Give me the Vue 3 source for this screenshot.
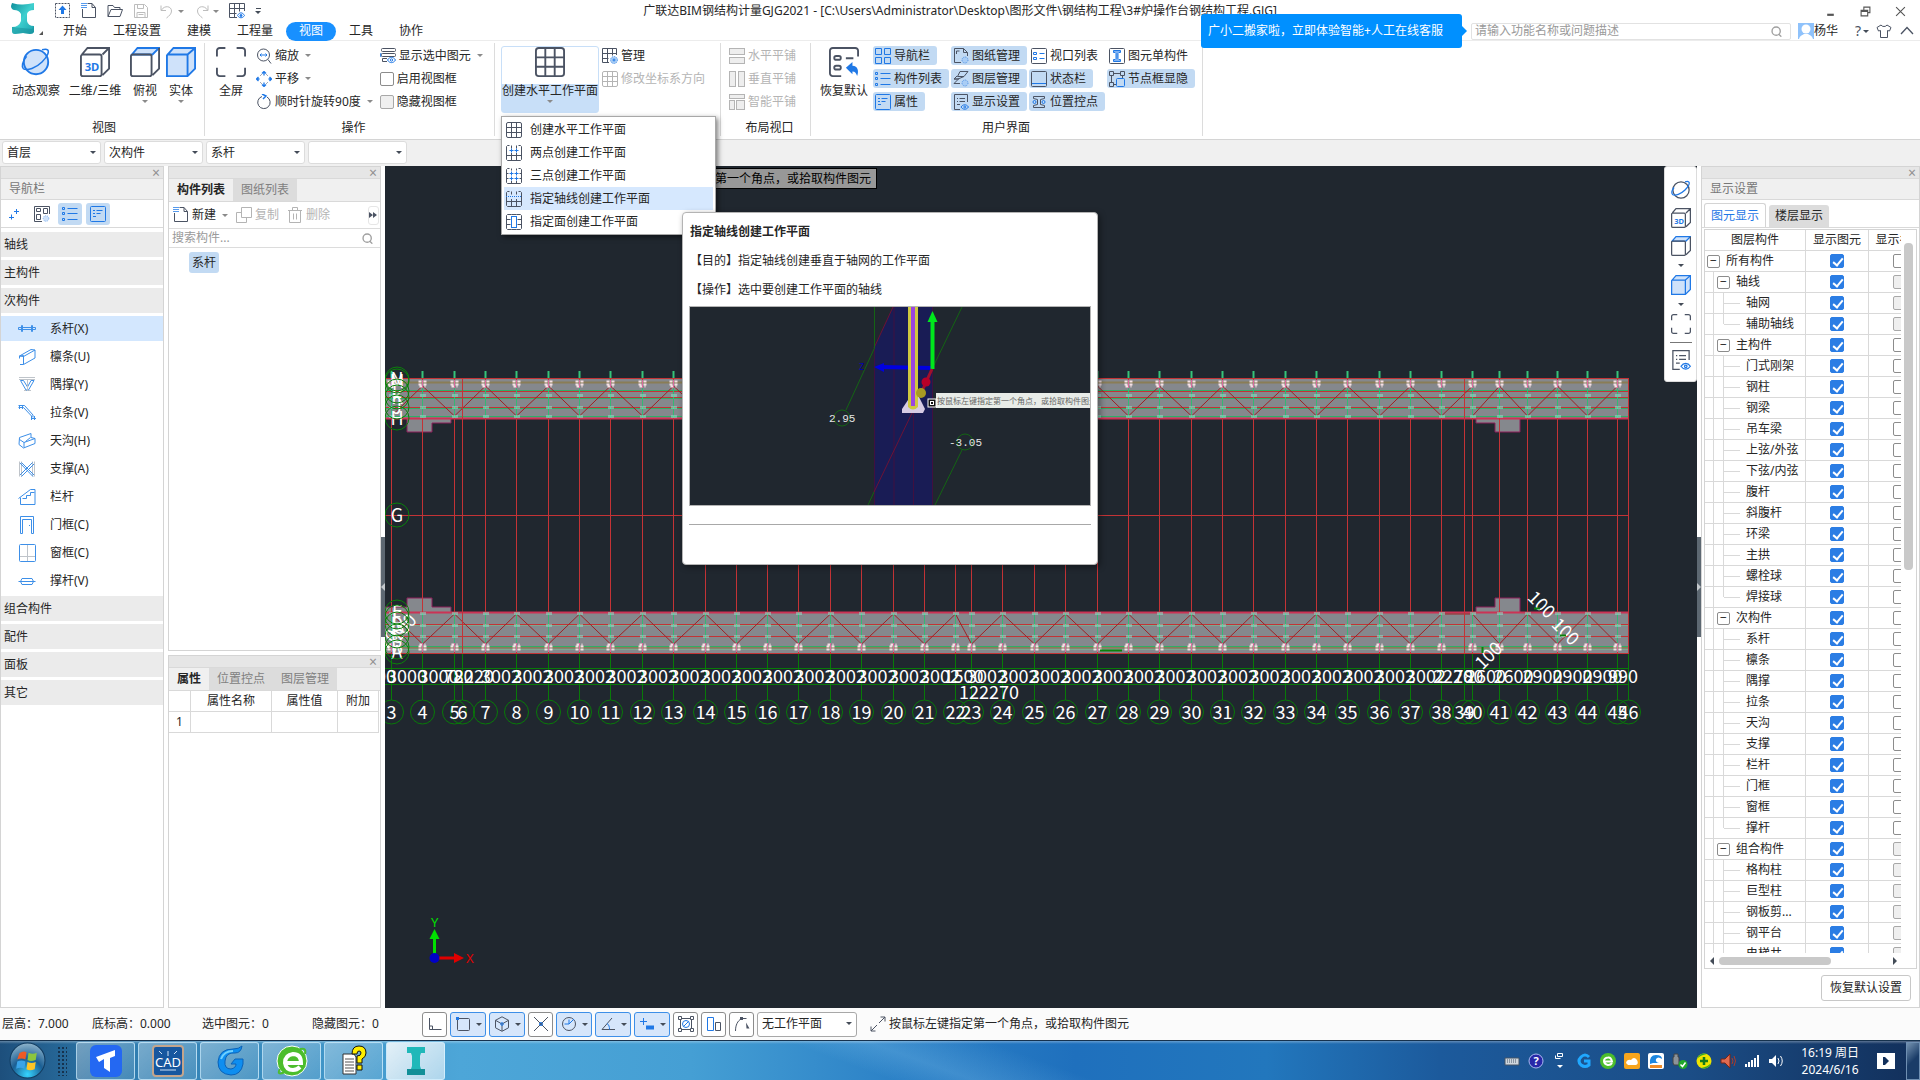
<template>
  <div class="app">
    <svg class="sprite" aria-hidden="true">
      <symbol id="i-upload" viewBox="0 0 16 16"><rect x="0.5" y="0.5" width="14" height="14" stroke-dasharray="2 1" /><path d="M7.5 2.5l4 4.5h-2.500v4h-3v-4H3.500z" fill="#1f78e6" stroke="none" /></symbol>
      <symbol id="i-new" viewBox="0 0 16 16"><path d="M1.500 6v8.500h13V4.500l-3.500-4H6.500M11 .5v4h3.500" /><path d="M.5 2.500h5M.5 4.500h5M.5.5h5M1 0v5M3 0v5M5 0v5" stroke="#1f78e6" stroke-dasharray="1 1" /></symbol>
      <symbol id="i-folder" viewBox="0 0 16 16"><path d="M1 13.500V2.500h5l1.500 2h5.500v2M1 13.500l3-7h11.500l-2.500 7z" /></symbol>
      <symbol id="i-save" viewBox="0 0 16 16"><path d="M1.500 1.500h10l3 3v10h-13zM4.500 1.500v4h6v-4M4 14.500V9.500h8v5M5.500 11.500h5" /></symbol>
      <symbol id="i-undo" viewBox="0 0 16 16"><path d="M2 2.500v5h5M2.500 7c3-5 10-4 10 1 0 3-2.500 5-5 7" /></symbol>
      <symbol id="i-redo" viewBox="0 0 16 16"><path d="M14 2.500v5H9M13.500 7c-3-5-10-4-10 1 0 3 2.500 5 5 7" /></symbol>
      <symbol id="i-grid" viewBox="0 0 16 16"><rect x="0.5" y="0.5" width="15" height="15" rx="1.5" /><path d="M5.500.5v15M10.500.5v15M.5 5.500h15M.5 10.500h15" /></symbol>
      <symbol id="i-grideye" viewBox="0 0 16 16"><path d="M15.500 8V.5H.5v14H8M5.500.5v14M10.500.5v8M.5 5.500h15M.5 10.500h7" /><path d="M8.500 12.500c2-3.500 5-3.500 7 0-2 3-5 3-7 0z" stroke="#1f78e6" fill="#fff" /><circle cx="12" cy="12.5" r="1" fill="#1f78e6" stroke="#1f78e6" /></symbol>
      <symbol id="i-gridgear" viewBox="0 0 16 16"><path d="M14.500 7V.5H.5v14H7M5.500.5v14M10.500.5v7M.5 5.500h14M.5 10.500h6" /><circle cx="12" cy="12" r="3.5" fill="#a9cdf5" stroke="#4a90e8" stroke-dasharray="1 1" /><circle cx="12" cy="12" r="1" stroke="#1f78e6" /></symbol>
      <symbol id="i-grid2" viewBox="0 0 16 16"><path d="M3.500.5h-2l-1 1v13l1 1h13l1-1v-13l-1-1h-2M5.500.5v3M10.500.5v3M5.500 8v7.500M10.500 8v7.500M.5 10.500h15" /><path d="M3.500 5.500h4M8.500 5.500h4M5.500 3.500v4M10.500 3.500v4" stroke="#1f78e6" /></symbol>
      <symbol id="i-grid3" viewBox="0 0 16 16"><path d="M3.500.5h-2l-1 1v13l1 1h13l1-1v-13l-1-1h-2M.5 5.500h2M13.500 5.500h2M.5 10.500h2M13.500 10.500h2M5.500.5v2M10.500.5v2M5.500 13v2.500M10.500 13v2.500" /><path d="M3.500 5.500h4M8.500 5.500h4M5.500 3.500v4M10.500 3.500v4M3.500 10.500h4M5.500 8.500v4M8.500 10.500h4M10.500 8.500v4" stroke="#1f78e6" /></symbol>
      <symbol id="i-gridline" viewBox="0 0 16 16"><path d="M3.500.5h-2l-1 1v13l1 1h13l1-1v-13l-1-1h-2M5.500.5v3M10.500.5v3M5.500 8v7.500M10.500 8v7.500M.5 10.500h15" /><path d="M0 5.500h16" stroke="#1f78e6" stroke-dasharray="1 1" /></symbol>
      <symbol id="i-gridface" viewBox="0 0 16 16"><path d="M5.500.5h-4l-1 1v13l1 1h4M10.500.5h4l1 1v13l-1 1h-4M5.500.5h5M5.500 15.500h5M.5 5.500h4M.5 10.500h4M11.500 5.500h4M11.500 10.500h4" /><rect x="5.5" y="2.5" width="5" height="11" stroke="#1f78e6" /></symbol>
      <symbol id="i-orbit" viewBox="0 0 16 16"><circle cx="8" cy="8" r="6.5" fill="#cfe2fa" stroke="#1f78e6" /><path d="M3 5C.5 8 .3 10.500 1.200 11.500c2 1.500 7-.5 10-3.500 3-3 4-5.500 3-6.500-.8-.6-2-.3-3 0" stroke="#1f78e6" stroke-width="0.8" /></symbol>
      <symbol id="i-orbit2" viewBox="0 0 16 16"><circle cx="8" cy="8" r="6.5" /><path d="M2.500 6C.5 8 .3 10.500 1.200 11.500c2 1.500 7-.5 10-3.500 3-3 4-5.500 3-6.500-.8-.6-2-.3-3 0" stroke="#1f78e6" /></symbol>
      <symbol id="i-cube3d" viewBox="0 0 16 16"><path d="M.5 5a1 1 0 0 1 1-1h9a1 1 0 0 1 1 1v9.500a1 1 0 0 1-1 1h-9a1 1 0 0 1-1-1zM1 4L4 .5h11.500L12 4M15.500.5v11L12 15M9 .5" /><text x="2.5" y="13" font-size="6" font-weight="700" fill="#1f78e6" stroke="none">3D</text></symbol>
      <symbol id="i-cube" viewBox="0 0 16 16"><path d="M1 4L4 .5h11.500L12 4z" fill="#cfe2fa" stroke="#1f78e6" /><path d="M.5 5a1 1 0 0 1 1-1h9a1 1 0 0 1 1 1v9.500a1 1 0 0 1-1 1h-9a1 1 0 0 1-1-1zM15.500.5v11L12 15" /></symbol>
      <symbol id="i-solid" viewBox="0 0 16 16"><path d="M.5 4.500L4 .5h11.500v11l-4 4H.5zM.5 4h11v11.500M11.500 4l4-3.500" fill="#cfe2fa" stroke="#1f78e6" /></symbol>
      <symbol id="i-full" viewBox="0 0 16 16"><path d="M.5 5V2a1.500 1.500 0 0 1 1.500-1.500h3M11 .5h3A1.500 1.500 0 0 1 15.500 2v3M15.500 11v3a1.500 1.500 0 0 1-1.500 1.500h-3M5 15.500H2A1.500 1.500 0 0 1 .5 14v-3" /></symbol>
      <symbol id="i-zoom" viewBox="0 0 16 16"><circle cx="7.5" cy="7" r="6" /><path d="M12 11.500l3 4" /><path d="M4 7h7M5.500 5.500L4 7l1.500 1.500M9.500 5.500L11 7 9.500 8.500" stroke="#1f78e6" /></symbol>
      <symbol id="i-pan" viewBox="0 0 16 16"><path d="M6 2.500L8 .5l2 2M6 13.500l2 2 2-2M2.500 6l-2 2 2 2M13.500 6l2 2-2 2M8 .5v4M8 11.500v4M.5 8h3M12.500 8h3" stroke="#1f78e6" stroke-width="1.3" /><path d="M4.500 4.500l1-1M11.500 4.500l-1-1M4.500 11.500l1 1M11.500 11.500l-1 1" /></symbol>
      <symbol id="i-rotate" viewBox="0 0 16 16"><path d="M6 2.500A6.200 6.200 0 1 0 11 3" /><path d="M6 0l4 2-3 3" stroke="#1f78e6" stroke-width="1.5" /></symbol>
      <symbol id="i-seleye" viewBox="0 0 16 16"><rect x="1.5" y="0.5" width="14" height="3" rx="1" /><rect x="1.5" y="5.5" width="14" height="3" rx="1" /><path d="M7 10.500H2.500v3H7" /><path d="M1 5l-.5 2L1 9" stroke="#1f78e6" /><path d="M7.500 12c2-3.500 6-3.500 8 0-2 3.500-6 3.500-8 0z" stroke="#1f78e6" fill="#fff" /><circle cx="11.5" cy="12" r="1.2" stroke="#1f78e6" /></symbol>
      <symbol id="i-tileh" viewBox="0 0 16 16"><rect x="0.5" y="0.5" width="15" height="6" fill="#eee" /><rect x="0.5" y="9.5" width="15" height="6" fill="#eee" /></symbol>
      <symbol id="i-tilev" viewBox="0 0 16 16"><rect x="0.5" y="0.5" width="6" height="15" fill="#eee" /><rect x="9.5" y="0.5" width="6" height="15" fill="#eee" /></symbol>
      <symbol id="i-tiles" viewBox="0 0 16 16"><rect x="0.5" y="0.5" width="15" height="4" fill="#eee" /><rect x="0.5" y="6.5" width="5" height="9" fill="#eee" /><rect x="7.5" y="6.5" width="8" height="9" fill="#eee" /></symbol>
      <symbol id="i-restore" viewBox="0 0 16 16"><path d="M6.500 15.500H2A1.500 1.500 0 0 1 .5 14V2A1.500 1.500 0 0 1 2 .5h12A1.500 1.500 0 0 1 15.500 2v3M9 6h4M8 11" /><rect x="2.8" y="4.8" width="3.5" height="2" rx="1" /><rect x="2.8" y="10" width="3.5" height="2" rx="1" /><path d="M9 11l3.500-3v2c3 0 3.500 3 2.500 5.500-.5-1.500-1-2.500-2.500-2.500v1.500z" fill="#1f78e6" stroke="none" /></symbol>
      <symbol id="i-nav" viewBox="0 0 16 16"><path d="M.5.5h6v6h-6zM9.500.5h6v6h-6zM.5 9.500h6v6h-6zM9.500 9.500h6v6h-6z" stroke="#1f78e6" /></symbol>
      <symbol id="i-list" viewBox="0 0 16 16"><path d="M5.500 2.500h10M5.500 7.500h10M5.500 13.500h10" stroke="#1f78e6" /><path d="M.5 1.500h2v2h-2zM.5 6.500h2v2h-2zM.5 12.500h2v2h-2z" stroke="#1f78e6" /></symbol>
      <symbol id="i-prop" viewBox="0 0 16 16"><rect x="0.5" y="0.5" width="15" height="15" rx="1" stroke="#1f78e6" /><path d="M3 4.500h2M6.500 4.500h6M3 7.500h2M6.500 7.500h4M3 10.500h3" stroke="#1f78e6" /></symbol>
      <symbol id="i-sheet" viewBox="0 0 16 16"><path d="M8 14.500H1.500V.5h9l4 4V8M10.500.5v4h4M3.500 6V3h3" /><circle cx="12" cy="12" r="3" fill="#a9cdf5" stroke="#4a90e8" stroke-dasharray="1 1" /></symbol>
      <symbol id="i-layer" viewBox="0 0 16 16"><path d="M4.500 5.500L7 .5h8l-4 5zM11 5.500L5 8H1l3-3M1 8h5M7 12.500H1L5 8.500M8 10" /><circle cx="12" cy="12" r="3" fill="#a9cdf5" stroke="#4a90e8" stroke-dasharray="1 1" /></symbol>
      <symbol id="i-disp" viewBox="0 0 16 16"><path d="M7 15.500H1.500V.5h13V8M4 4.500h1M6.500 4.500H12M4 7.500h1M6.500 7.500H12M4 10.500h3" /><path d="M8 13c2-3 5.500-3 7.500 0-2 3-5.500 3-7.500 0z" stroke="#1f78e6" /><circle cx="11.8" cy="13" r="1" stroke="#1f78e6" /></symbol>
      <symbol id="i-viewlist" viewBox="0 0 16 16"><rect x="0.5" y="0.5" width="15" height="15" rx="1" /><path d="M2.500 4.500h3v2h-3zM2.500 9.500h3v2h-3zM8.500 5.500h5M8.500 10.500h5" stroke="#1f78e6" /></symbol>
      <symbol id="i-status" viewBox="0 0 16 16"><rect x="0.5" y="0.5" width="15" height="15" rx="1" /><path d="M1 12.500h14" stroke="#1f78e6" /></symbol>
      <symbol id="i-ctrl" viewBox="0 0 16 16"><path d="M2.500 2.500h11v2l-4 1v5l4 1v2h-11v-2l4-1v-5l-4-1z" /><circle cx="3.5" cy="8" r="1.5" stroke="#1f78e6" /><circle cx="12.5" cy="8" r="1.5" stroke="#1f78e6" /></symbol>
      <symbol id="i-ibeam" viewBox="0 0 16 16"><rect x="0.5" y="0.5" width="15" height="15" rx="1" /><path d="M4.500 2.500h7v2H10l-1 1v5l1 1h1.500v2h-7v-2H6l1-1v-5l-1-1H4.500z" fill="#7fb2f2" stroke="#1f78e6" /></symbol>
      <symbol id="i-node" viewBox="0 0 16 16"><path d="M.5.5h4v4h-4zM11.500.5h4v4h-4zM.5 11.500h4v4h-4zM4.500 2.500h7M2.500 4.500v7M13.500 4.500v3M4.500 13.500h3" /><rect x="7.5" y="7.5" width="8" height="8" rx="1" stroke="#1f78e6" /></symbol>
      <symbol id="i-plus2" viewBox="0 0 16 16"><path d="M10.500 3v5M8 5.500h5M5.500 8.500v5M3 11.500h5" stroke="#1f78e6" /></symbol>
      <symbol id="i-cards" viewBox="0 0 16 16"><path d="M8 15.500H.5V.5h15V8M2.500 2.500h4v3h-4zM9.500 2.500h4v5h-4zM2.500 8.500h4v5h-4z" /><circle cx="12" cy="12.5" r="2.8" stroke="#7fb2f2" fill="#cfe2fa" stroke-dasharray="1 1" /></symbol>
      <symbol id="i-copy" viewBox="0 0 16 16"><path d="M5.500.5h10v10h-10zM5.500 5.500h-5v10h10v-5" /></symbol>
      <symbol id="i-trash" viewBox="0 0 16 16"><path d="M1 3.500h14M5.500 3.500v-3h5v3M2.500 3.500v12h11v-12M6.500 6.500v6M9.500 6.500v6" /></symbol>
      <symbol id="i-search" viewBox="0 0 16 16"><circle cx="7.5" cy="7.5" r="6" stroke-width="2" /><path d="M11 11.500l4 4" stroke-width="2" /></symbol>
      <symbol id="n-tie" viewBox="0 0 18 18"><path d="M5 7.500h8M5 9.500h8M3.500 5.500h1v6h-1zM13.500 5.500h1v6h-1zM.5 7.500h3v2h-3zM14.500 7.500h3v2h-3z" /></symbol>
      <symbol id="n-purlin" viewBox="0 0 18 18"><path d="M1.500 8L13 1.500l4 .5v8L5.500 16.500v-9zM1.500 8l4 .5L17 2M1.500 8v2.500M2 16.500h3.500M5.500 8.500v6" /></symbol>
      <symbol id="n-knee" viewBox="0 0 18 18"><path d="M1 1.500h16M1 3.500h16M6 14.500h7" stroke="#bfc4ca" /><path d="M2.500 4.500L8 14h2.500L16 4.500h-3L9.500 11 5.500 4.500z" /><path d="M9.500 3v12" stroke="#bfc4ca" /></symbol>
      <symbol id="n-rod" viewBox="0 0 18 18"><path d="M1.500 1v4M13.500 12v4M16.500 12v4M4.500 1v4M.5 3.500h5l8.500 9M.5 1.500h6l8.500 9.500v2.500M13 14.500h5" /></symbol>
      <symbol id="n-gutter" viewBox="0 0 18 18"><path d="M1.500 5.500L13 1.500v4l4 1v5L5.500 16 1 12.500zM1.500 7.500l4.500 3L17 6.500M6 10.500v5M12.500 5.500l-5 4" /></symbol>
      <symbol id="n-brace" viewBox="0 0 18 18"><path d="M1.500 1.500v15M3.500 1.500v15M14.500 1.500v15M16.500 1.500v15" stroke="#bfc4ca" /><path d="M2 3l13 13.500M3.500 2.500L16 15M2 15L14.500 2.500M3.500 16.500L16 4" /></symbol>
      <symbol id="n-rail" viewBox="0 0 18 18"><path d="M.5 10.500L12.500 1.500h4.500M17 1.500v15H2.500v-7M16.500 4.500h-4v3h-4v3h-4" /></symbol>
      <symbol id="n-door" viewBox="0 0 18 18"><path d="M2.500.5h13v17h-2v-14h-9v14h-2z" /><path d="M11 9.500h1" /></symbol>
      <symbol id="n-window" viewBox="0 0 18 18"><path d="M9.500 1v16M2 12.500h15" stroke="#bfc4ca" /><rect x="1.5" y="0.5" width="16" height="17" rx="1" /></symbol>
      <symbol id="n-strut" viewBox="0 0 18 18"><path d="M.5 9.500h17M4 6.500h10l1.500 3-1.500 3H4l-1.500-3z" /></symbol>
      <symbol id="s-ortho" viewBox="0 0 16 16"><path d="M2.500 2v11.500h12M5.500 13v-3h-3" /></symbol>
      <symbol id="s-rect" viewBox="0 0 16 16"><path d="M3.500 2.500h10a1 1 0 0 1 1 1v10a1 1 0 0 1-1 1h-10a1 1 0 0 1-1-1v-10z" /><path d="M1 1h3v3H1z" fill="#1f78e6" stroke="none" /></symbol>
      <symbol id="s-box" viewBox="0 0 16 16"><path d="M8 .8l6.500 3.500v7.500L8 15.300l-6.500-3.500V4.300zM1.500 4.300L8 8l6.500-3.700M8 8v7" /><circle cx="8" cy="8" r="1.3" stroke="#1f78e6" /></symbol>
      <symbol id="s-cross" viewBox="0 0 16 16"><path d="M1 1l14 14M15 1L1 15" /><circle cx="8" cy="8" r="1.5" stroke="#1f78e6" /></symbol>
      <symbol id="s-circle" viewBox="0 0 16 16"><circle cx="8" cy="8" r="6.5" /><path d="M8 8V3.500M3.500 8H8l5-5" stroke="#1f78e6" /></symbol>
      <symbol id="s-angle" viewBox="0 0 16 16"><path d="M12 2L2 13.500h13" /><path d="M7 7.500c2 1 2.500 3.500 2.500 6" stroke="#1f78e6" /></symbol>
      <symbol id="s-point" viewBox="0 0 16 16"><path d="M1 5.500h7M4.500 2v7" stroke="#1f78e6" /><path d="M7 10.500h8M7 12.500h8" stroke="#1f78e6" stroke-width="2" /></symbol>
      <symbol id="s-snap" viewBox="0 0 16 16"><path d="M2.500 2.500h11v11h-11z" /><path d="M.5.5h3v3h-3zM12.500.5h3v3h-3zM.5 12.500h3v3h-3zM12.500 12.500h3v3h-3z" fill="#fff" /><circle cx="8" cy="8" r="3.5" stroke="#1f78e6" /><path d="M5.500 10.500l5-5" stroke="#1f78e6" /></symbol>
      <symbol id="s-align" viewBox="0 0 16 16"><path d="M1.500 1.500h6v13h-6z" stroke="#1f78e6" /><path d="M9.500 6.500h5v8h-5z" /></symbol>
      <symbol id="s-curve" viewBox="0 0 16 16"><path d="M1.500 15c0-6 2-10 6-12.500h5" /><path d="M6 1h3v3H6zM12 6.500l3.500 6h-3z" fill="#4b5363" stroke="none" /></symbol>
    </svg>

    <header class="header">
      <button class="logo" aria-label="应用菜单">
        <svg viewBox="0 0 36 34" class="logo-mark">
          <defs>
            <linearGradient id="teal" x1="0" x2="1" y1="0" y2="1"><stop offset="0" stop-color="#0f8f9c" /><stop offset="0.5" stop-color="#3fd0cf" /><stop offset="1" stop-color="#1aa0ad" /></linearGradient>
          </defs>
          <path d="M4 1q7 2 11 1.500Q20 2 26 1v7q-6 0-7 4v7q1 5 7 5v6q-1 2-4 2l-7-1-8 1q-3 0-3-3v-4q7 0 9-6v-7q-2-4-7-4-3-1-3-4z" fill="url(#teal)" />
          <path d="M4 25l20 2 2-3v6q-1 2-4 2l-7-1-8 1q-3 0-3-3z" fill="#168c98" opacity="0.5" />
          <path d="M35 29v4h-4z" fill="#555" />
        </svg>
      </button>
      <div class="title-row">
        <div class="quick">
          <button v-for="q in quickActions" :key="q.icon" class="bare" :class="{ dim: q.disabled }" :aria-label="q.label">
            <svg class="ico"><use :href="'#' + q.icon" /></svg>
            <i v-if="q.caret" class="caret"></i>
          </button>
          <button class="bare more" aria-label="自定义"><i class="bar"></i><i class="caret dark"></i></button>
        </div>
        <h1>广联达BIM钢结构计量GJG2021 - [C:\Users\Administrator\Desktop\图形文件\钢结构工程\3#炉操作台钢结构工程.GJG]</h1>
        <div class="win">
          <button class="bare" aria-label="最小化"><svg viewBox="0 0 10 10"><path d="M2 8h6" stroke-width="2" /></svg></button>
          <button class="bare" aria-label="还原"><svg viewBox="0 0 10 10"><path d="M1 4h6v5H1zM3.500 4V1H9v5H7M1 5h6" /></svg></button>
          <button class="bare" aria-label="关闭"><svg viewBox="0 0 10 10"><path d="M1 1l8 8M9 1L1 9" /></svg></button>
        </div>
      </div>
      <div class="tab-row">
        <nav class="tabs">
          <button v-for="t in tabs" :key="t" :class="{ active: t === activeTab }" @click="activeTab = t">{{ t }}</button>
        </nav>
        <div class="header-right">
          <div class="help-search">
            <input v-model="helpQuery" type="text" placeholder="请输入功能名称或问题描述" aria-label="请输入功能名称或问题描述">
            <svg class="ico small"><use href="#i-search" /></svg>
            <div class="notice">广小二搬家啦，立即体验智能+人工在线客服</div>
          </div>
          <button class="bare user">
            <svg viewBox="0 0 16 16"><rect width="16" height="16" fill="#8fc2fb" /><circle cx="8" cy="6" r="4.5" fill="#fff" /><path d="M1 16c1-4 4-4 5-5h4c1 1 4 1 5 5z" fill="#fff" /></svg>杨华
          </button>
          <button class="bare ask" aria-label="帮助">?<i class="caret dark"></i></button>
          <button class="bare" aria-label="皮肤"><svg class="ico" viewBox="0 0 16 16"><path d="M5 2L1 4.500l1.500 3.500 2-.5v7h7v-7l2 .5L15 4.500 11 2c-1 2-5 2-6 0z" /></svg></button>
          <button class="bare" aria-label="折叠功能区"><svg class="ico" viewBox="0 0 16 16"><path d="M2 11l6-6.500 6 6.500" stroke-width="1.3" /></svg></button>
        </div>
      </div>
    </header>

    <section class="ribbon">
      <div class="group g-view">
        <div class="group-body">
          <button class="big"><svg class="ico large"><use href="#i-orbit" /></svg><span>动态观察</span></button>
          <button class="big wide"><svg class="ico large"><use href="#i-cube3d" /></svg><span>二维/三维</span></button>
          <button class="big"><svg class="ico large"><use href="#i-cube" /></svg><span>俯视</span><i class="caret"></i></button>
          <button class="big"><svg class="ico large"><use href="#i-solid" /></svg><span>实体</span><i class="caret"></i></button>
        </div>
        <p class="caption">视图</p>
      </div>
      <div class="group g-op">
        <div class="group-body">
          <button class="big"><svg class="ico large"><use href="#i-full" /></svg><span>全屏</span></button>
          <div class="col">
            <button class="tool"><svg class="ico"><use href="#i-zoom" /></svg>缩放<i class="caret"></i></button>
            <button class="tool"><svg class="ico"><use href="#i-pan" /></svg>平移<i class="caret"></i></button>
            <button class="tool"><svg class="ico"><use href="#i-rotate" /></svg>顺时针旋转90度<i class="caret"></i></button>
          </div>
          <div class="col">
            <button class="tool"><svg class="ico"><use href="#i-seleye" /></svg>显示选中图元<i class="caret"></i></button>
            <label class="tool"><input v-model="viewBox" type="checkbox" class="check">启用视图框</label>
            <label class="tool"><input type="checkbox" class="check" disabled>隐藏视图框</label>
          </div>
        </div>
        <p class="caption">操作</p>
      </div>
      <div class="group g-plane">
        <div class="group-body">
          <div class="split">
            <button class="big opened"><svg class="ico large"><use href="#i-grid" /></svg><span>创建水平工作平面</span><i class="caret"></i></button>
            <ul class="menu">
              <li v-for="m in planeMenu" :key="m.text">
                <button :class="{ hover: m.text === hoveredItem }" @mouseenter="hoveredItem = m.text">
                  <svg class="ico"><use :href="'#' + m.icon" /></svg>{{ m.text }}
                </button>
              </li>
            </ul>
          </div>
          <div class="col">
            <button class="tool"><svg class="ico"><use href="#i-gridgear" /></svg>管理</button>
            <button class="tool" disabled><svg class="ico"><use href="#i-grid" /></svg>修改坐标系方向</button>
          </div>
        </div>
      </div>
      <div class="group g-tile">
        <div class="group-body">
          <div class="col">
            <button class="tool" disabled><svg class="ico"><use href="#i-tileh" /></svg>水平平铺</button>
            <button class="tool" disabled><svg class="ico"><use href="#i-tilev" /></svg>垂直平铺</button>
            <button class="tool" disabled><svg class="ico"><use href="#i-tiles" /></svg>智能平铺</button>
          </div>
        </div>
        <p class="caption">布局视口</p>
      </div>
      <div class="group g-ui">
        <div class="group-body">
          <button class="big"><svg class="ico large"><use href="#i-restore" /></svg><span>恢复默认</span></button>
          <div v-for="(column, i) in uiToggles" :key="i" class="col toggles">
            <button v-for="b in column" :key="b.text" class="tool" :class="{ on: b.on }" @click="b.on = !b.on">
              <svg class="ico"><use :href="'#' + b.icon" /></svg>{{ b.text }}
            </button>
          </div>
        </div>
        <p class="caption">用户界面</p>
      </div>
    </section>

    <div class="filters">
      <span v-for="f in filters" :key="f.label" class="select">
        <select :aria-label="f.label"><option>{{ f.value }}</option></select>
      </span>
    </div>

    <main class="work">
      <aside class="panel nav">
        <div class="grip"><button aria-label="关闭导航栏">×</button></div>
        <h2>导航栏</h2>
        <div class="nav-tools">
          <button aria-label="添加"><svg class="ico"><use href="#i-plus2" /></svg></button>
          <button aria-label="卡片"><svg class="ico"><use href="#i-cards" /></svg></button>
          <button class="on" aria-label="列表"><svg class="ico"><use href="#i-list" /></svg></button>
          <button class="on" aria-label="属性"><svg class="ico"><use href="#i-prop" /></svg></button>
        </div>
        <ul class="nav-list">
          <li v-for="n in navItems" :key="n.text">
            <button :class="{ head: !n.icon, current: n.text === currentNav }" @click="currentNav = n.text">
              <svg v-if="n.icon" class="nav-ico"><use :href="'#' + n.icon" /></svg>{{ n.text }}
            </button>
          </li>
        </ul>
      </aside>

      <div class="middle">
        <section class="panel comps">
          <div class="grip"><button aria-label="关闭构件列表">×</button></div>
          <div class="dock-tabs"><button class="sel">构件列表</button><button>图纸列表</button></div>
          <div class="comp-tools">
            <button class="tool"><svg class="ico"><use href="#i-new" /></svg>新建<i class="caret"></i></button>
            <button class="tool" disabled><svg class="ico"><use href="#i-copy" /></svg>复制</button>
            <button class="tool" disabled><svg class="ico"><use href="#i-trash" /></svg>删除</button>
            <button class="next" aria-label="更多"><svg viewBox="0 0 8 6"><path d="M0 0l4 3-4 3zM4 0l4 3-4 3z" fill="#4b5363" /></svg></button>
          </div>
          <div class="comp-search">
            <input v-model="compQuery" type="text" placeholder="搜索构件..." aria-label="搜索构件">
            <svg class="ico small"><use href="#i-search" /></svg>
          </div>
          <button class="comp-tag">系杆</button>
        </section>
        <section class="panel props">
          <div class="grip"><button aria-label="关闭属性">×</button></div>
          <div class="dock-tabs"><button class="sel">属性</button><button>位置控点</button><button>图层管理</button></div>
          <table>
            <colgroup><col class="c-no"><col class="c-name"><col class="c-val"><col></colgroup>
            <tbody>
              <tr><th></th><th>属性名称</th><th>属性值</th><th>附加</th></tr>
              <tr><td>1</td><td></td><td></td><td></td></tr>
            </tbody>
          </table>
        </section>
      </div>

      <div class="splitter"><i></i></div>

      <section class="canvas">
        <svg class="drawing" viewBox="385 166 1312 842" preserveAspectRatio="xMinYMin slice">
          <g fill="#85888d">
            <path d="M385 378H1628V419H1520V432H1495V423H1476V419H451V423H432V432H407V419H385z" />
            <path d="M385 653H1628V612H1520V598H1495V607H1476V612H451V607H432V598H407V607H385z" />
          </g>
          <g fill="none" stroke="#8c1f5a">
            <path d="M407 419v13h25v-9h19v-4M1476 419v4h19v9h25v-13" />
            <path d="M385 607h22v-9h25v9h19v5M1476 612v-5h19v-9h25v14" />
          </g>
          <path d="M385 382.500H1628M385 647.500H1628" stroke="#8a7d56" stroke-width="2" />
          <path d="M385 390.500H1628M385 398.500H1628M385 408.500H1628M385 416.500H1628M385 646.500H1628" stroke="#2fae68" />
          <path d="M385 649.500H1628M385 625.500H1628" stroke="#7da890" />
          <path d="M385 378.500H1628M385 391.500H1628M385 397.500H1628M385 407.500H1628M385 624.500H1628M385 636.500H1628M385 653.500H1628M385 515.500H1628" stroke="#c33336" />
          <path d="M385 418.500H1628M385 612.500H1628" stroke="#cc3355" stroke-width="2" />
          <g fill="none" stroke="#9c2226">
            <path :d="topBrace" />
            <path :d="bottomBrace" />
          </g>
          <g v-for="a in axes" :key="a.name">
            <path :d="`M${a.x} 378V654`" stroke="#c33336" />
            <template v-if="!a.minor">
              <path :d="`M${a.x} 371v7`" stroke="#36c47a" stroke-width="2" />
              <path :d="`M${a.x} 388v30M${a.x} 613v30`" stroke="#35b774" />
              <path :d="`M${a.x - 4} 381.500h8M${a.x - 4} 384.500h8M${a.x - 3} 386.500h6M${a.x - 4} 646.500h8M${a.x - 4} 649.500h8M${a.x - 3} 644.500h6`" stroke="#f6dfe4" stroke-width="2" stroke-dasharray="3 2" />
              <path :d="`M${a.x} 380v8M${a.x} 643v9`" stroke="#d86b9c" />
              <path :d="`M${a.x - 2} 395.500h5M${a.x - 2} 407.500h5M${a.x - 2} 416.500h5M${a.x - 2} 613.500h5M${a.x - 2} 625.500h5M${a.x - 2} 636.500h5`" stroke="#8fe8cf" stroke-width="3" stroke-dasharray="1 1" />
            </template>
            <path :d="`M${a.x} 654v46`" stroke="#087a08" />
            <circle :cx="a.x" cy="712" r="12" fill="none" stroke="#087a08" />
          </g>
          <path d="M385 668.500H1628M385 684.500H1628M1628.500 654v46" stroke="#087a08" fill="none" />
          <g class="cad-text">
            <text v-for="a in axes" :key="a.name" :x="a.x" y="719">{{ a.name }}</text>
            <text v-for="(d, i) in dims" :key="i" :x="d.x" y="683">{{ d.text }}</text>
            <text x="989" y="699">122270</text>
            <text x="397" y="522">G</text>
            <text v-for="l in rowLetters" :key="l.t" x="397" :y="l.y">{{ l.t }}</text>
            <text transform="translate(1537 609) rotate(45)">100</text>
            <text transform="translate(1561 636) rotate(45)">100</text>
            <text transform="translate(1493 660) rotate(-45)">100</text>
            <text transform="translate(408 632) rotate(-50)">100</text>
            <text transform="translate(396 640) rotate(-50)">700</text>
          </g>
          <g fill="none" stroke="#0a820a">
            <circle cx="397" cy="515" r="12" />
            <circle v-for="l in rowLetters" :key="l.t" cx="397" :cy="l.y - 7" r="12" />
          </g>
          <path d="M1534 608.500h6M1560 635.500h6M1482.500 647v6M1100 650.500h22" stroke="#0a820a" stroke-width="2" />
          <path d="M434.500 957v-22" stroke="#00e000" stroke-width="3" />
          <path d="M434.500 929l-5 10h10z" fill="#00e000" />
          <path d="M435 958h20" stroke="#e00000" stroke-width="3" />
          <path d="M464 958l-10-5v10z" fill="#e00000" />
          <circle cx="434.5" cy="958" r="5" fill="#0000c8" />
          <text x="431" y="927" class="axis-name" fill="#00e000">Y</text>
          <text x="466" y="963" class="axis-name" fill="#e00000">X</text>
        </svg>
        <div class="hint">按鼠标左键指定第一个角点，或拾取构件图元</div>
        <div class="view-tools">
          <button aria-label="动态观察"><svg class="ico"><use href="#i-orbit2" /></svg></button>
          <button aria-label="三维"><svg class="ico"><use href="#i-cube3d" /></svg></button>
          <button aria-label="俯视"><svg class="ico"><use href="#i-cube" /></svg><i class="caret dark"></i></button>
          <button aria-label="实体"><svg class="ico"><use href="#i-solid" /></svg><i class="caret dark"></i></button>
          <button aria-label="全屏"><svg class="ico"><use href="#i-full" /></svg></button>
          <button class="set" aria-label="显示设置"><svg class="ico"><use href="#i-disp" /></svg></button>
        </div>
      </section>

      <div class="splitter right"><i></i></div>

      <aside class="panel display">
        <div class="grip"><button aria-label="关闭显示设置">×</button></div>
        <h2>显示设置</h2>
        <div class="page-tabs"><button class="sel">图元显示</button><button>楼层显示</button></div>
        <div class="tree">
          <div class="tree-main">
            <div class="tree-clip">
              <table>
                <colgroup><col class="c-layer"><col class="c-show"><col class="c-label"></colgroup>
                <thead><tr><th>图层构件</th><th>显示图元</th><th>显示名称</th></tr></thead>
                <tbody>
                  <tr v-for="(r, i) in layers" :key="i">
                    <td>
                      <div class="node">
                        <i v-if="r.level > 0" class="rail"></i>
                        <i v-if="r.level > 1" class="rail inner" :class="{ end: r.last }"></i>
                        <i v-if="r.level > 1" class="elbow"></i>
                        <button v-else class="fold" :class="{ child: r.level }" aria-label="折叠">−</button>
                        <span>{{ r.name }}</span>
                      </div>
                    </td>
                    <td><input v-model="r.shown" type="checkbox" class="check" :aria-label="r.name + '显示图元'"></td>
                    <td><input type="checkbox" class="check" :disabled="r.locked" :aria-label="r.name + '显示名称'"></td>
                  </tr>
                </tbody>
              </table>
            </div>
            <div class="vbar"><i></i></div>
          </div>
          <div class="hbar"><b class="left"></b><i></i><b></b></div>
        </div>
        <div class="display-foot"><button>恢复默认设置</button></div>
      </aside>
    </main>

    <footer class="status">
      <span class="short">层高：7.000</span>
      <span>底标高：0.000</span>
      <span>选中图元：0</span>
      <span>隐藏图元：0</span>
      <div class="status-tools">
        <button v-for="s in statusTools" :key="s.icon" :class="{ on: s.on }" :aria-label="s.label">
          <svg class="ico"><use :href="'#' + s.icon" /></svg><i v-if="s.on" class="caret dark"></i>
        </button>
        <div class="select plane"><select aria-label="工作平面"><option>无工作平面</option></select></div>
      </div>
      <svg class="ico" viewBox="0 0 16 16"><path d="M9 7l6-6M10.500 1H15v4.500M7 9l-6 6M1 10.500V15h4.500" /></svg>
      <p>按鼠标左键指定第一个角点，或拾取构件图元</p>
    </footer>

    <div class="taskbar">
      <button class="start" aria-label="开始">
        <svg viewBox="0 0 36 36">
          <defs><radialGradient id="orb" cx="0.5" cy="0.9" r="0.9"><stop offset="0" stop-color="#35d4ff" /><stop offset="0.5" stop-color="#1b5f94" /><stop offset="1" stop-color="#8fb4cc" /></radialGradient></defs>
          <circle cx="18" cy="18" r="17" fill="url(#orb)" stroke="#123c60" />
          <path d="M10 11q4-3 7-1l-1 7q-4-2-8 0z" fill="#ef5a24" />
          <path d="M19 10.500q4 2 8 0l-1 7q-5 2-8 0z" fill="#8cc63e" />
          <path d="M8 19q4-2 8 0l-1 7q-4-2-8 0z" fill="#3aa4e8" />
          <path d="M18 19.500q4 2 8 0l-1 7q-5 2-8 0z" fill="#fdc526" />
        </svg>
      </button>
      <i class="dots"></i>
      <div class="apps">
        <button aria-label="T"><svg viewBox="0 0 32 32"><rect width="32" height="32" rx="6" fill="#2468f2" /><path d="M6 12L25 5v6l-5 2v14l-6-4v-9l-5 3z" fill="#fff" /></svg></button>
        <button aria-label="CAD"><svg viewBox="0 0 32 32"><rect x="1" y="1" width="30" height="30" rx="3" fill="#17579f" stroke="#c3a58c" stroke-width="2" /><path d="M16 6v5M8 25h16M10 9L7 6M22 9l3-3" stroke="#cfe2f5" /><text x="16" y="22" font-size="13" text-anchor="middle" fill="#fff">CAD</text></svg></button>
        <button aria-label="G"><svg viewBox="0 0 32 32"><path d="M28 1q-1 7-7 7-9-1-10 8-1 8 6 8 5-1 5-5h-5l4-5h8v5q-2 11-12 11Q4 29 4 17 5 4 19 4q6 0 9-3z" fill="#0e8ef0" stroke="#0a62b8" /><path d="M7 14q3-8 12-8" fill="none" stroke="#6fd0ff" stroke-width="2" /></svg></button>
        <button aria-label="浏览器"><svg viewBox="0 0 32 32"><circle cx="16" cy="16" r="15" fill="#4cbd2c" stroke="#fff" /><path d="M8 18h17q0-9-8-9-8 1-8 9 1 7 8 7 4 0 7-3" fill="none" stroke="#fff" stroke-width="4" /><path d="M4 24Q0 31 9 27M22 5q9-4 7 4" fill="none" stroke="#4cbd2c" stroke-width="2" /></svg></button>
        <button aria-label="帮助文档"><svg viewBox="0 0 32 32"><path d="M5 9h11l2 3v17H5z" fill="#fff" stroke="#333" /><path d="M7 14h9M7 17h9M7 20h9M7 23h9M7 26h9" stroke="#555" /><path d="M14 9q0-8 7-8t7 7q0 4-4 6v4h-5v-7q4 0 4-3 0-2-2-2t-2 3zM19 20h5v5h-5z" fill="#ffee00" stroke="#111" /></svg></button>
        <button class="front" aria-label="GJG"><svg viewBox="0 0 32 32"><path d="M7 2h18v6h-4l-1 3v10l1 3h4v6H7v-6h4l1-3V11l-1-3H7z" fill="#1fb8b9" /><path d="M7 24h18v6H7z" fill="#128f98" /></svg></button>
      </div>
      <div class="tray">
        <svg viewBox="0 0 16 16"><path d="M1 5h14v7H1z" fill="#cfd6dd" stroke="#456" /><path d="M3 7h10M3 9h10" stroke="#456" stroke-dasharray="1 1" /></svg>
        <svg viewBox="0 0 16 16"><circle cx="8" cy="8" r="7" fill="#2828a8" stroke="#aab8f0" /><text x="8" y="12" font-size="11" font-weight="700" text-anchor="middle" fill="#fff">?</text></svg>
        <svg viewBox="0 0 16 16"><path d="M5.500.5h5v3h-5zM3.500 2.500v3h5" fill="none" stroke="#fff" /><path d="M5 12h6l-3 3z" fill="#fff" /></svg>
        <svg viewBox="0 0 16 16"><path d="M13 4Q9 0 5 4t0 8q4 3 8 0V8H8" fill="none" stroke="#20a8ff" stroke-width="3" /></svg>
        <svg viewBox="0 0 16 16"><circle cx="8" cy="8" r="8" fill="#4cbd2c" /><path d="M4 8.500h8Q11 4 8 4.500 4 5 4 8t4 4q3 0 4-2" fill="none" stroke="#fff" stroke-width="2" /></svg>
        <svg viewBox="0 0 16 16"><rect width="16" height="16" rx="2" fill="#f7a51d" /><path d="M2 10q1-4 5-3 3-4 6 0 2 4-1 5H4z" fill="#fff" /></svg>
        <svg viewBox="0 0 16 16"><rect width="16" height="16" rx="2" fill="#fff" /><path d="M2 11Q1 2 8 2q6 0 6 4-4-3-6 0-1 3 3 4H5z" fill="#1c86e0" /><path d="M2 12h12v3H2z" fill="#f08c28" /></svg>
        <svg viewBox="0 0 16 16"><path d="M2 1h4v3h1v8H2l-1-2V4h1z" fill="#8b9299" stroke="#444" /><circle cx="11" cy="11.5" r="4.5" fill="#21a82c" /><path d="M8.500 11.500l2 2 3-4" fill="none" stroke="#fff" stroke-width="1.5" /></svg>
        <svg viewBox="0 0 16 16"><circle cx="8" cy="8" r="7.5" fill="#efe400" /><path d="M1 6a7.500 7.500 0 0 1 10-5Q4 2 1 6zM15 10a7.500 7.500 0 0 1-10 5q7-1 10-5z" fill="#2fa52d" /><path d="M8 4v8M4 8h8" stroke="#167a1c" stroke-width="2.5" /></svg>
        <svg viewBox="0 0 16 16"><path d="M1 6h4l5-5v14l-5-5H1z" fill="#e06a50" stroke="#7b2415" /><path d="M12 5q2 3 0 6M14 3q3 5 0 10" stroke="#b03a28" fill="none" /></svg>
        <svg viewBox="0 0 16 16"><path d="M2 14v-3M5 14V9M8 14V7M11 14V5M14 14V2" stroke="#fff" stroke-width="2" /></svg>
        <svg viewBox="0 0 16 16"><path d="M1 6h3l4-4v12l-4-4H1z" fill="#fff" /><path d="M10 5q2 3 0 6M12.500 3q3.500 5 0 10" stroke="#fff" fill="none" /></svg>
      </div>
      <time>16:19 周日<br>2024/6/16</time>
      <button class="notify" aria-label="操作中心"><svg viewBox="0 0 18 16"><rect width="18" height="16" fill="#fff" /><path d="M6 4h2l4 4-4 4H6z" fill="#12305c" /></svg></button>
      <button class="peek" aria-label="显示桌面"></button>
    </div>

    <article class="tip">
      <h3>指定轴线创建工作平面</h3>
      <p>【目的】指定轴线创建垂直于轴网的工作平面</p>
      <p>【操作】选中要创建工作平面的轴线</p>
      <svg class="tip-art" viewBox="0 0 400 198">
        <rect width="400" height="198" fill="#20272f" />
        <path d="M203 0H243V198H184V41z" fill="#191c55" />
        <g fill="none" stroke="#401040"><path d="M204 0V198M223.500 106V198M184.500 41V198M242.500 0V198" /><path d="M203 0L184 41M222 106L184 185" stroke="#6c1236" /></g>
        <g fill="none" stroke="#146414"><path d="M184.500 0V41L156 103M272 0L244 58M272 143L245 198M184 185l-6 13" /><circle cx="152" cy="111" r="8" /><circle cx="275" cy="135" r="8" /></g>
        <path d="M242 61L190 60" stroke="#0000e0" stroke-width="4" />
        <path d="M184 60l10-4v9z" fill="#0000e0" />
        <path d="M220 90h9l6 12-2 4h-21v-4z" fill="#d6cbe4" />
        <path d="M218 0h10v100q-5 5-10 0z" fill="#cfc93f" />
        <path d="M221 0h4v99h-4z" fill="#9a45e0" />
        <path d="M242.500 62V14" stroke="#00e81c" stroke-width="4" />
        <path d="M242.500 4l-5 11h10z" fill="#00e81c" />
        <path d="M242 62l-9 20" stroke="#a0102c" stroke-width="3" />
        <circle cx="236" cy="75" r="4.5" fill="#b80028" />
        <circle cx="231" cy="86" r="5" fill="#a89a22" />
        <rect x="246" y="86" width="154" height="15" fill="#e8ece8" />
        <rect x="238" y="92" width="8" height="8" fill="#111" stroke="#fff" />
        <rect x="240.5" y="94.5" width="3" height="3" fill="none" stroke="#fff" />
        <text x="247" y="97" font-size="8" fill="#666">按鼠标左键指定第一个角点，或拾取构件图元</text>
        <text x="139" y="115" class="mono">2.95</text>
        <text x="259" y="139" class="mono">-3.05</text>
        <text x="169" y="63" font-size="9" fill="#0000b0">Z</text>
      </svg>
      <hr>
    </article>
  </div>
</template>

<script setup>
import { ref, reactive, computed } from 'vue'

const activeTab = ref('视图')
const currentNav = ref('系杆(X)')
const hoveredItem = ref('指定轴线创建工作平面')
const helpQuery = ref('')
const compQuery = ref('')
const viewBox = ref(false)

const tabs = ['开始', '工程设置', '建模', '工程量', '视图', '工具', '协作']

const quickActions = [
  { icon: 'i-upload', label: '上传' },
  { icon: 'i-new', label: '新建' },
  { icon: 'i-folder', label: '打开' },
  { icon: 'i-save', label: '保存', disabled: true },
  { icon: 'i-undo', label: '撤销', disabled: true, caret: true },
  { icon: 'i-redo', label: '恢复', disabled: true, caret: true },
  { icon: 'i-grideye', label: '工作平面' }
]

const planeMenu = [
  { icon: 'i-grid', text: '创建水平工作平面' },
  { icon: 'i-grid2', text: '两点创建工作平面' },
  { icon: 'i-grid3', text: '三点创建工作平面' },
  { icon: 'i-gridline', text: '指定轴线创建工作平面' },
  { icon: 'i-gridface', text: '指定面创建工作平面' }
]

const uiToggles = reactive([
  [
    { icon: 'i-nav', text: '导航栏', on: true },
    { icon: 'i-list', text: '构件列表', on: true },
    { icon: 'i-prop', text: '属性', on: true }
  ],
  [
    { icon: 'i-sheet', text: '图纸管理', on: true },
    { icon: 'i-layer', text: '图层管理', on: true },
    { icon: 'i-disp', text: '显示设置', on: true }
  ],
  [
    { icon: 'i-viewlist', text: '视口列表', on: false },
    { icon: 'i-status', text: '状态栏', on: true },
    { icon: 'i-ctrl', text: '位置控点', on: true }
  ],
  [
    { icon: 'i-ibeam', text: '图元单构件', on: false },
    { icon: 'i-node', text: '节点框显隐', on: true }
  ]
])

const filters = [
  { label: '楼层', value: '首层' },
  { label: '构件分类', value: '次构件' },
  { label: '构件类型', value: '系杆' },
  { label: '构件', value: '' }
]

const navItems = [
  { text: '轴线' },
  { text: '主构件' },
  { text: '次构件' },
  { text: '系杆(X)', icon: 'n-tie' },
  { text: '檩条(U)', icon: 'n-purlin' },
  { text: '隅撑(Y)', icon: 'n-knee' },
  { text: '拉条(V)', icon: 'n-rod' },
  { text: '天沟(H)', icon: 'n-gutter' },
  { text: '支撑(A)', icon: 'n-brace' },
  { text: '栏杆', icon: 'n-rail' },
  { text: '门框(C)', icon: 'n-door' },
  { text: '窗框(C)', icon: 'n-window' },
  { text: '撑杆(V)', icon: 'n-strut' },
  { text: '组合构件' },
  { text: '配件' },
  { text: '面板' },
  { text: '其它' }
]

const statusTools = [
  { icon: 's-ortho', label: '正交' },
  { icon: 's-rect', label: '矩形', on: true },
  { icon: 's-box', label: '体', on: true },
  { icon: 's-cross', label: '交点' },
  { icon: 's-circle', label: '圆', on: true },
  { icon: 's-angle', label: '角度', on: true },
  { icon: 's-point', label: '点', on: true },
  { icon: 's-snap', label: '捕捉' },
  { icon: 's-align', label: '对齐' },
  { icon: 's-curve', label: '曲线' }
]

const layerTree = [
  { name: '轴线', locked: true, children: ['轴网', '辅助轴线'] },
  { name: '主构件', children: ['门式刚架', '钢柱', '钢梁', '吊车梁', '上弦/外弦', '下弦/内弦', '腹杆', '斜腹杆', '环梁', '主拱', '螺栓球', '焊接球'] },
  { name: '次构件', children: ['系杆', '檩条', '隅撑', '拉条', '天沟', '支撑', '栏杆', '门框', '窗框', '撑杆'] },
  { name: '组合构件', locked: true, children: ['格构柱', '巨型柱', '钢板剪...', '钢平台', '电梯井'] }
]

const layers = reactive([
  { name: '所有构件', level: 0, shown: true, locked: false },
  ...layerTree.flatMap(g => [
    { name: g.name, level: 1, shown: true, locked: !!g.locked },
    ...g.children.map((c, i) => ({
      name: c,
      level: 2,
      shown: true,
      locked: !!g.locked,
      last: i === g.children.length - 1
    }))
  ])
])

// axis 3 to 46, left to right
const axisX = [
  391, 422, 454, 462, 485, 516, 548, 579, 610, 642, 673, 705, 736, 767, 798,
  830, 861, 893, 924, 955, 971, 1002, 1034, 1065, 1097, 1128, 1159, 1191, 1222,
  1253, 1285, 1316, 1347, 1379, 1410, 1441, 1464, 1472, 1499, 1527, 1557, 1587,
  1617, 1628
]
const minorAxes = [6, 39, 46]

const axes = axisX.map((x, i) => ({
  name: i + 3,
  x: x + 0.5,
  minor: minorAxes.includes(i + 3)
}))

const dimText = { 3: '3000', 4: '3000', 5: '780', 6: '2220', 22: '1500', 38: '2220', 39: '780', 40: '2600', 41: '2600', 42: '2900', 43: '2900', 44: '2900', 45: '990' }

const dims = [
  { x: 376, text: '3000' },
  ...axes.slice(0, -1).map((a, i) => ({
    x: (a.x + axes[i + 1].x) / 2,
    text: dimText[a.name] || '3002'
  }))
]

const rowLetters = [
  { t: 'N', y: 386 },
  { t: 'M', y: 388 },
  { t: 'L', y: 398 },
  { t: 'K', y: 404 },
  { t: 'J', y: 414 },
  { t: 'H', y: 425 },
  { t: 'F', y: 619 },
  { t: 'E', y: 624 },
  { t: 'D', y: 631 },
  { t: 'C', y: 643 },
  { t: 'B', y: 654 },
  { t: 'A', y: 659 }
]

// zigzag bracing, odd axes on one side of the band and even ones on the other
const zigzag = (oddY, evenY, restart) => {
  const special = { 3: evenY, 4: oddY, 5: evenY }
  return axes
    .filter(a => !a.minor)
    .map((a, i) => {
      if (a.name === 40) {
        return restart ? `L${a.x} ${oddY}M${a.x} ${evenY}` : `L${a.x} ${evenY}`
      }
      const y = special[a.name] || (a.name % 2 ? oddY : evenY)
      return `${i ? 'L' : 'M'}${a.x} ${y}`
    })
    .join('')
}
const topBrace = computed(() => zigzag(386, 416, true))
const bottomBrace = computed(() => zigzag(644, 614, false))
</script>

<style>
body {
  margin: 0;
  overflow: hidden;
}
</style>

<style scoped>
* {
  box-sizing: border-box;
}

.app {
  height: 100vh;
  display: flex;
  flex-direction: column;
  position: relative;
  background: #fff;
  color: #262626;
  font-family: "Noto Sans", "Noto Sans CJK SC", sans-serif;
  font-size: 12px;
  line-height: 16px;
}

button,
input,
select {
  font: inherit;
  color: inherit;
}

button {
  background: none;
  border: none;
  padding: 0;
  margin: 0;
  white-space: nowrap;
}

h1, h2, h3, p, ul {
  margin: 0;
  padding: 0;
  font-size: 12px;
  font-weight: 400;
  list-style: none;
}

.sprite {
  position: absolute;
  width: 0;
  height: 0;
}

.ico {
  width: 16px;
  height: 16px;
  flex: none;
  fill: none;
  stroke: currentColor;
  color: #4b5363;
}

.ico.large {
  width: 30px;
  height: 30px;
}

.ico.small {
  width: 11px;
  height: 11px;
  color: #a0a0a0;
}

.caret {
  width: 0;
  height: 0;
  border: 3px solid transparent;
  border-top-color: #8a8a8a;
  border-bottom: none;
}

.caret.dark {
  border-top-color: #444c58;
}

.bare {
  display: flex;
  align-items: center;
}

/* header */
.header {
  flex: none;
  position: relative;
  border-bottom: 1px solid #ececec;
}

.logo {
  position: absolute;
  top: 2px;
  left: 8px;
  z-index: 1;
}

.logo-mark {
  display: block;
  width: 36px;
  height: 34px;
}

.title-row {
  display: grid;
  grid-template-columns: 1fr auto 1fr;
  align-items: center;
  height: 22px;
}

.quick {
  display: flex;
  align-items: center;
  gap: 10px;
  padding-left: 55px;
}

.quick .bare {
  gap: 3px;
}

.dim .ico {
  color: #bdbdbd;
}

.quick .more {
  flex-direction: column;
  gap: 2px;
}

.bar {
  width: 5px;
  height: 1px;
  background: #444c58;
}

.win {
  display: flex;
  justify-content: flex-end;
  gap: 24px;
  padding-right: 14px;
}

.win svg {
  width: 11px;
  height: 11px;
  fill: none;
  stroke: #555;
}

.tab-row {
  display: flex;
  justify-content: space-between;
  align-items: center;
  height: 18px;
  padding-left: 50px;
}

.tabs {
  display: flex;
}

.tabs button {
  height: 19px;
  padding: 0 13px;
  border-radius: 10px;
}

.tabs .active {
  background: #1890ff;
  color: #fff;
}

.header-right {
  display: flex;
  align-items: center;
  gap: 7px;
  padding-right: 5px;
}

.help-search {
  position: relative;
  display: flex;
  align-items: center;
  width: 320px;
  height: 17px;
  padding-right: 8px;
  border: 1px solid #e2e2e2;
  border-radius: 2px;
}

input[type="text"] {
  flex: 1;
  min-width: 0;
  height: 15px;
  padding: 0 3px;
  border: none;
  outline: none;
  background: none;
}

input::placeholder {
  color: #9a9a9a;
  opacity: 1;
}

.notice {
  position: absolute;
  right: 328px;
  top: -10px;
  z-index: 5;
  padding: 9px 19px 9px 7px;
  border-radius: 3px;
  background: #0090ff;
  color: #fff;
  white-space: nowrap;
}

.notice::after {
  content: "";
  position: absolute;
  right: -5px;
  top: 12px;
  border: 5px solid transparent;
  border-left-color: #0090ff;
  border-right: none;
}

.user svg {
  width: 16px;
  height: 16px;
}

.ask {
  gap: 2px;
  padding-left: 10px;
  color: #4b5363;
  font-size: 14px;
}

/* ribbon */
.ribbon {
  flex: none;
  display: flex;
  height: 98px;
  padding: 2px 0 3px;
}

.group {
  display: flex;
  flex-direction: column;
  border-right: 1px solid #dcdcdc;
  padding-top: 3px;
}

.g-view {
  padding-left: 9px;
  padding-right: 5px;
}

.g-op {
  width: 290px;
  padding-left: 8px;
}

.g-op .group-body {
  gap: 7px;
}

.g-plane {
  width: 226px;
  padding-left: 6px;
}

.g-plane .group-body {
  gap: 3px;
}

.g-tile {
  width: 90px;
  padding-left: 8px;
}

.g-ui {
  padding-left: 6px;
  padding-right: 7px;
}

.g-ui .group-body {
  gap: 2px;
}

.group-body {
  display: flex;
  flex: 1;
}

.caption {
  text-align: center;
}

.big {
  display: flex;
  flex-direction: column;
  align-items: center;
  height: 67px;
  padding: 1px 3px 0;
}

.big.wide {
  min-width: 64px;
}

.big span {
  margin-top: 6px;
}

.big .caret {
  margin-top: 1px;
}

.split {
  position: relative;
}

.big.opened {
  padding: 0;
  border: 1px solid #c8dff8;
  border-radius: 3px;
  background: linear-gradient(#fff 37px, #c8dff8 37px);
}

.menu {
  position: absolute;
  top: 70px;
  left: 0;
  z-index: 10;
  width: 215px;
  padding: 1px 2px;
  background: #fff;
  border: 1px solid #a8a8a8;
  box-shadow: 2px 2px 5px rgba(0, 0, 0, 0.5);
}

.menu button {
  display: flex;
  align-items: center;
  gap: 8px;
  width: 100%;
  height: 23px;
  padding-left: 2px;
}

.menu .hover {
  background: #d6e8fe;
}

.col {
  display: flex;
  flex-direction: column;
  align-items: flex-start;
  gap: 4px;
}

.tool {
  display: flex;
  align-items: center;
  gap: 3px;
  height: 19px;
  border-radius: 3px;
  white-space: nowrap;
}

.tool .caret {
  margin-left: 3px;
}

.tool:disabled,
.tool:disabled .ico {
  color: #b4b4b4;
}

.toggles .tool {
  padding: 0 7px 0 2px;
}

.tool.on {
  background: #c2daf3;
}

.check {
  appearance: none;
  display: block;
  flex: none;
  width: 14px;
  height: 14px;
  margin: 0;
  border: 1px solid #8c8c8c;
  border-radius: 2px;
  background: #fff;
}

.check:disabled {
  background: #efefef;
  border-color: #a8a8a8;
}

.check:checked {
  border-color: #2b7de4;
  background: #2b7de4;
}

.check:checked::after {
  content: "";
  display: block;
  width: 4px;
  height: 8px;
  margin: 1px 0 0 4px;
  border: solid #fff;
  border-width: 0 2px 2px 0;
  transform: rotate(40deg);
}

/* filter bar */
.filters {
  flex: none;
  display: flex;
  gap: 3px;
  height: 27px;
  padding: 1px 2px;
  background: #f0f0f0;
  border-top: 1px solid #d4d4d4;
}

.select {
  position: relative;
  width: 99px;
  height: 23px;
}

.select select {
  appearance: none;
  width: 100%;
  height: 100%;
  padding: 0 4px;
  border: 1px solid #dcdcdc;
  border-radius: 3px;
  background: #fff;
}

.select::after {
  content: "";
  position: absolute;
  right: 5px;
  top: 10px;
  border: 3px solid transparent;
  border-top-color: #444c58;
  border-bottom: none;
}

/* workspace */
.work {
  flex: 1;
  min-height: 0;
  display: flex;
}

.panel {
  display: flex;
  flex-direction: column;
  border: 1px solid #d4d4d4;
  background: #fff;
}

.grip {
  flex: none;
  display: flex;
  justify-content: flex-end;
  align-items: center;
  height: 11px;
  padding-right: 3px;
  background: #e6e6e6;
}

.grip button {
  color: #909090;
  font-size: 14px;
  line-height: 11px;
}

.panel h2 {
  flex: none;
  height: 22px;
  padding: 0 8px;
  line-height: 20px;
  color: #777;
  background: #f0f0f0;
  border-top: 1px solid #d9d9d9;
  border-bottom: 1px solid #d9d9d9;
}

.nav {
  width: 164px;
  margin-right: 4px;
}

.nav-tools {
  flex: none;
  display: flex;
  align-items: center;
  gap: 4px;
  height: 28px;
  padding-left: 1px;
  border-bottom: 1px solid #d9d9d9;
}

.nav-tools button {
  display: grid;
  place-items: center;
  width: 24px;
  height: 22px;
  border-radius: 3px;
}

.nav-tools .on {
  background: #c2daf3;
}

.nav-list {
  display: flex;
  flex-direction: column;
  gap: 3px;
  padding-top: 4px;
}

.nav-list button {
  display: flex;
  align-items: center;
  gap: 14px;
  width: 100%;
  height: 25px;
  padding-left: 17px;
}

.nav-list .head {
  padding-left: 3px;
  background: #ebebeb;
}

.nav-list .current {
  background: #d3e7fe;
}

.nav-ico {
  width: 18px;
  height: 18px;
  fill: none;
  stroke: #3d8fe8;
}

.middle {
  display: flex;
  flex-direction: column;
  gap: 4px;
  width: 213px;
}

.comps {
  flex: 485;
}

.props {
  flex: 353;
}

.dock-tabs {
  flex: none;
  display: flex;
  height: 24px;
  background: #f0f0f0;
  border-top: 1px solid #d9d9d9;
  border-bottom: 1px solid #d9d9d9;
}

.dock-tabs button {
  padding: 0 8px;
  color: #808080;
  background: #dcdcdc;
}

.dock-tabs .sel {
  background: #f0f0f0;
  color: #262626;
  font-weight: 700;
}

.comp-tools {
  flex: none;
  display: flex;
  align-items: center;
  gap: 8px;
  height: 27px;
  padding-left: 4px;
  border-bottom: 1px solid #dcdcdc;
}

.next {
  width: 11px;
  height: 19px;
  margin: 0 1px 0 auto;
  border: 1px solid #e6e6e6;
  border-radius: 3px;
}

.next svg {
  display: block;
  width: 8px;
  height: 6px;
}

.comp-search {
  flex: none;
  display: flex;
  align-items: center;
  height: 19px;
  padding-right: 7px;
  border-bottom: 1px solid #dcdcdc;
}

.comp-tag {
  align-self: flex-start;
  height: 21px;
  margin: 4px 0 0 20px;
  padding: 0 3px;
  border-radius: 3px;
  background: #c2daf3;
}

table {
  border-spacing: 0;
  table-layout: fixed;
}

th,
td {
  height: 21px;
  padding: 0;
  border: solid #d9d9d9;
  border-width: 0 1px 1px 0;
  font-weight: 400;
  text-align: center;
  white-space: nowrap;
}

.props table {
  width: 210px;
}

.c-no {
  width: 22px;
}

.c-name {
  width: 81px;
}

.c-val {
  width: 66px;
}

.splitter {
  display: flex;
  align-items: center;
  width: 4px;
  background: #fff;
}

.splitter i {
  position: relative;
  width: 4px;
  height: 100px;
  background: #5d6872;
}

.splitter i::after {
  content: "";
  position: absolute;
  left: 0;
  top: 46px;
  border: 4px solid transparent;
  border-right-color: #c3c8cc;
  border-left: none;
}

.splitter.right i::after {
  border-left: 4px solid #c3c8cc;
  border-right: none;
}

/* canvas */
.canvas {
  flex: 1;
  min-width: 0;
  position: relative;
  overflow: hidden;
  background: #20272f;
}

.drawing {
  position: absolute;
  inset: 0;
  width: 100%;
  height: 100%;
}

.cad-text {
  font-family: "Noto Sans CJK SC", sans-serif;
  font-size: 18px;
  fill: #fff;
  text-anchor: middle;
}

.axis-name {
  font-size: 13px;
}

.hint {
  position: absolute;
  left: 240px;
  top: 2px;
  padding: 2px 5px 1px;
  border: 1px solid #000;
  background: #989898;
  color: #000;
}

.view-tools {
  position: absolute;
  right: 0;
  top: 0;
  display: flex;
  flex-direction: column;
  align-items: center;
  gap: 8px;
  width: 33px;
  padding: 13px 0 11px;
  border: 1px solid #dcdcdc;
  border-radius: 3px;
  background: #fff;
}

.view-tools button {
  display: flex;
  flex-direction: column;
  align-items: center;
  gap: 8px;
}

.view-tools .ico {
  width: 20px;
  height: 20px;
}

.view-tools .set {
  padding: 7px 1px 0;
  border-top: 1px solid #777;
}

/* display settings */
.display {
  width: 219px;
}

.page-tabs {
  flex: none;
  display: flex;
  align-items: flex-end;
  gap: 3px;
  height: 28px;
  padding-left: 2px;
  border-bottom: 1px solid #d9d9d9;
}

.page-tabs button {
  height: 22px;
  padding: 0 6px;
  border-radius: 3px 3px 0 0;
  background: #dcdcdc;
}

.page-tabs .sel {
  height: 24px;
  border: 1px solid #d4d4d4;
  border-bottom: none;
  background: #fff;
  color: #1f78e6;
}

.tree {
  flex: 1;
  min-height: 0;
  display: flex;
  flex-direction: column;
  margin: 1px 2px 0;
  border: 1px solid #d4d4d4;
}

.tree-main {
  flex: 1;
  min-height: 0;
  display: flex;
}

.tree-clip {
  flex: 1;
  min-width: 0;
  overflow: hidden;
}

.tree table {
  width: 226px;
}

.c-layer {
  width: 101px;
}

.c-show {
  width: 63px;
}

.tree .check {
  margin: 0 auto;
}

.node {
  display: flex;
  align-items: center;
  height: 20px;
}

.rail {
  align-self: stretch;
  width: 9px;
  border-right: 1px solid #d9d9d9;
}

.rail.inner {
  width: 10px;
}

.rail.end {
  height: 10px;
  align-self: flex-start;
}

.elbow {
  width: 16px;
  height: 1px;
  margin-right: 6px;
  background: #d9d9d9;
}

.fold {
  width: 13px;
  height: 13px;
  margin: 0 6px 0 2px;
  border: 1px solid #8c8c8c;
  border-radius: 2px;
  line-height: 10px;
}

.fold.child {
  margin-left: 3px;
}

.vbar {
  width: 15px;
  padding: 13px 3px 0;
}

.vbar i {
  display: block;
  width: 9px;
  height: 46%;
  border-radius: 4px;
  background: #c9c9c9;
}

.hbar {
  flex: none;
  display: flex;
  align-items: center;
  gap: 5px;
  height: 15px;
  padding: 0 19px 0 5px;
}

.hbar i {
  width: 112px;
  height: 8px;
  margin-right: auto;
  border-radius: 4px;
  background: #c9c9c9;
}

.hbar b {
  border: 4px solid transparent;
  border-left-color: #444c58;
  border-right: none;
}

.hbar .left {
  border-left: none;
  border-right: 4px solid #444c58;
}

.display-foot {
  flex: none;
  display: flex;
  justify-content: flex-end;
  padding: 6px 8px;
}

.display-foot button {
  width: 90px;
  height: 26px;
  border: 1px solid #c8c8c8;
  border-radius: 3px;
}

/* status bar */
.status {
  flex: none;
  display: flex;
  align-items: center;
  height: 32px;
  padding-left: 2px;
  background: #fbfbfb;
}

.status > span {
  width: 110px;
}

.status > .short {
  width: 90px;
}

.status > .ico {
  margin: 0 3px 0 13px;
}

.status-tools {
  display: flex;
  gap: 3px;
}

.status-tools button {
  display: flex;
  align-items: center;
  justify-content: center;
  gap: 5px;
  width: 25px;
  height: 25px;
  border: 1px solid #8c8c8c;
  border-radius: 3px;
  background: #fff;
}

.status-tools .on {
  width: 36px;
  border-color: #3d8fe8;
  background: #d6e6fb;
}

.select.plane {
  width: 100px;
  height: 25px;
}

.plane select {
  border-color: #a8a8a8;
}

/* taskbar */
.taskbar {
  flex: none;
  display: flex;
  align-items: center;
  height: 40px;
  border-top: 1px solid #16324e;
  background:
    linear-gradient(rgba(255, 255, 255, 0.3), rgba(255, 255, 255, 0) 3px),
    linear-gradient(20deg, transparent 44%, rgba(150, 210, 245, 0.22) 48%, transparent 54%),
    linear-gradient(90deg, #1d4f7c 0, #2e7bae 6%, #4da6d8 24%, #459fd4 36%, #2b80c6 47%, #1f70bd 56%, #2277bd 66%, #1c5a9c 75%, #1b4d86 88%, #122f5a 100%);
  color: #fff;
}

.start {
  margin-left: 9px;
}

.start svg {
  display: block;
  width: 37px;
  height: 37px;
}

.dots {
  width: 10px;
  height: 30px;
  margin: 0 9px 0 11px;
  background: radial-gradient(circle, #16324e 1px, transparent 1px) 0 0 / 4px 4px;
}

.apps {
  display: flex;
  gap: 3px;
  flex: 1;
}

.apps button {
  display: grid;
  place-items: center;
  width: 59px;
  height: 38px;
  border: 1px solid rgba(210, 240, 255, 0.7);
  border-radius: 3px;
  background: linear-gradient(135deg, rgba(255, 255, 255, 0.35), rgba(255, 255, 255, 0.1));
}

.apps .front {
  background: linear-gradient(135deg, rgba(255, 255, 255, 0.85), rgba(255, 255, 255, 0.55));
}

.apps svg {
  width: 32px;
  height: 32px;
}

.tray {
  display: flex;
  gap: 8px;
}

.tray svg {
  width: 16px;
  height: 16px;
}

time {
  margin: 0 18px 0 17px;
  text-align: center;
  line-height: 17px;
}

.notify svg {
  display: block;
  width: 18px;
  height: 16px;
}

.peek {
  width: 14px;
  height: 38px;
  margin-left: 11px;
  border: 1px solid #6f8fb2;
  background: linear-gradient(135deg, #7592b0, #1a3c68 50%);
}

/* rich tooltip */
.tip {
  position: absolute;
  left: 682px;
  top: 212px;
  z-index: 20;
  width: 416px;
  height: 353px;
  padding: 11px 6px 0;
  border: 1px solid #b4b4b4;
  border-radius: 4px;
  background: #fff;
  box-shadow: 2px 2px 6px rgba(0, 0, 0, 0.4);
}

.tip h3 {
  padding-left: 1px;
  font-weight: 700;
}

.tip p {
  margin-top: 13px;
  padding-left: 1px;
}

.tip-art {
  display: block;
  width: 402px;
  margin-top: 8px;
  border: 1px solid #b4b4b4;
}

.mono {
  font-family: "Liberation Mono", monospace;
  font-size: 11px;
  fill: #e4e4e4;
}

.tip hr {
  margin: 18px 0 0;
  border: none;
  border-top: 1px solid #a8a8a8;
}
</style>
